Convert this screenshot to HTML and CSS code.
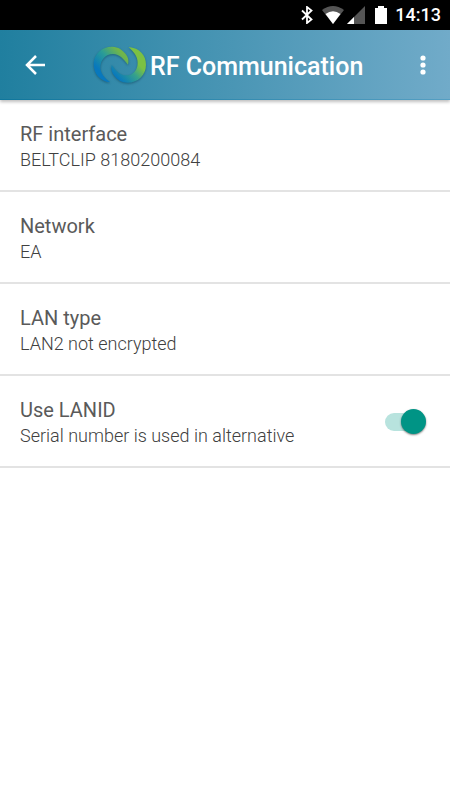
FILE: index.html
```html
<!DOCTYPE html>
<html lang="en">
<head>
<meta charset="utf-8">
<meta name="viewport" content="width=device-width, initial-scale=1">
<title>RF Communication</title>
<link rel="stylesheet" href="styles.css">
</head>
<body>
<div class="status-bar">
  <svg class="bluetooth" viewBox="0 0 12 18" aria-hidden="true"><path d="M1 4.500 10.500 13.500 6 17V1l4.500 3.500L1 13.500" fill="none" stroke="#fff" stroke-width="1.800"/></svg>
  <svg class="wifi" viewBox="0 0 22 18" aria-hidden="true"><path d="M0 4Q11-4 22 4L11 18Z" fill="#555"/><path d="M3.500 8Q11 2.500 18.500 8L11 18Z" fill="#fff"/></svg>
  <svg class="signal" viewBox="0 0 18 18" aria-hidden="true"><path d="M18 0V18H0Z" fill="#555"/><path d="M7 11V18H0Z" fill="#fff"/></svg>
  <svg class="battery" viewBox="0 0 12 18" aria-hidden="true"><path d="M3 0H9V2H12V18H0V2H3Z" fill="#fff"/></svg>
  <time>14:13</time>
</div>
<header class="app-bar">
  <button class="icon-button" type="button" aria-label="Back">
    <svg class="back-icon" viewBox="0 0 20 20" aria-hidden="true"><path d="M20 10H2M11 1 2 10l9 9" fill="none" stroke="#fff" stroke-width="2.500"/></svg>
  </button>
  <div class="brand">
    <svg class="logo" viewBox="0 0 162 114" aria-hidden="true">
      <defs>
        <linearGradient id="left" x1="0" y1="1" x2="1" y2="0"><stop offset="0.250" stop-color="#0878bd"/><stop offset="0.550" stop-color="#2b9c96"/><stop offset="0.800" stop-color="#70b54b"/></linearGradient>
        <linearGradient id="right" x1="0" y1="1" x2="1" y2="0"><stop offset="0.150" stop-color="#0878bd"/><stop offset="0.450" stop-color="#35a18c"/><stop offset="0.650" stop-color="#7bc143"/></linearGradient>
      </defs>
      <path d="M52 109C20 106 2 82 2 54C2 24 26 2 58 2C76 2 90 13 98 24C106 34 108 44 105 56C92 40 80 24 60 24C38 24 22 42 22 64C22 84 36 97 52 109Z" fill="url(#left)"/>
      <path d="M107 3C140 6 159 28 159 56C159 86 136 110 104 110C86 110 72 100 64 89C56 79 53 68 56 56C68 73 80 88 100 88C121 88 134 72 134 50C134 30 121 17 107 3Z" fill="url(#right)"/>
    </svg>
    <h1>RF Communication</h1>
  </div>
  <button class="icon-button" type="button" aria-label="More options">
    <svg class="more-icon" viewBox="0 0 6 20" aria-hidden="true"><g fill="#fff"><circle cx="3" cy="3" r="2.600"/><circle cx="3" cy="10" r="2.600"/><circle cx="3" cy="17" r="2.600"/></g></svg>
  </button>
</header>
<main class="settings">
  <button class="setting" type="button"><span class="label"><span class="title">RF interface</span><span class="summary">BELTCLIP 8180200084</span></span></button>
  <button class="setting" type="button"><span class="label"><span class="title">Network</span><span class="summary">EA</span></span></button>
  <button class="setting" type="button"><span class="label"><span class="title">LAN type</span><span class="summary">LAN2 not encrypted</span></span></button>
  <label class="setting" for="lanid"><span class="label"><span class="title">Use LANID</span><span class="summary">Serial number is used in alternative</span></span><input class="switch" id="lanid" type="checkbox" role="switch" checked></label>
</main>
</body>
</html>
```
FILE: styles.css
```css
* { box-sizing: border-box; }

body {
  margin: 0;
  background: #fff;
  color: #555;
  font-family: Roboto, sans-serif;
}

button {
  border: 0;
  background: none;
  color: inherit;
  font: inherit;
}

svg { display: block; }

.status-bar {
  display: flex;
  align-items: center;
  justify-content: flex-end;
  height: 30px;
  padding-right: 9px;
  background: #000;
  color: #fff;
  font-size: 18px;
  font-weight: 500;
  line-height: 32px;
}

.bluetooth { width: 12px; height: 18px; margin-right: 9px; }
.wifi { width: 22px; height: 18px; margin-right: 3px; }
.signal { width: 18px; height: 18px; margin-right: 10px; }
.battery { width: 12px; height: 18px; margin-right: 8px; }

.app-bar {
  display: flex;
  align-items: center;
  height: 70px;
  padding: 0 10px;
  background: linear-gradient(to right, #207f9f, #71abc9);
  border: solid;
  border-width: 0 0 1px;
  border-image: linear-gradient(to right, #0f769c, #559fc3) 1;
  box-shadow: 0 2px 3px rgba(0, 0, 0, 0.25);
  color: #fff;
}

.icon-button {
  display: grid;
  place-items: center;
  width: 50px;
  height: 50px;
  padding: 0;
}

.icon-button:last-child { width: 35px; margin-left: auto; }
.back-icon { width: 20px; height: 20px; }
.more-icon { width: 6px; height: 20px; }

.brand {
  display: flex;
  align-items: center;
  gap: 3px;
  margin-left: 33px;
}

.logo {
  width: 54px;
  height: 38px;
  filter: drop-shadow(0 1px 1px rgba(0, 40, 60, 0.4));
}

h1 {
  margin: 0;
  padding-top: 4px;
  font-size: 25px;
  font-weight: 500;
  line-height: 32px;
}

.setting {
  display: flex;
  align-items: center;
  justify-content: space-between;
  width: 100%;
  min-height: 92px;
  padding: 21px 20px 18px;
  border-bottom: 2px solid #e3e3e3;
  text-align: left;
}

.title, .summary { display: block; }
.title { color: #5a5a5a; font-size: 20px; line-height: 26px; }
.summary { color: #404040; font-size: 18px; font-weight: 300; line-height: 25px; }

.switch {
  appearance: none;
  position: relative;
  width: 36px;
  height: 18px;
  margin: 0 9px 2px 0;
  border-radius: 9px;
  background: #b8e3de;
}

.switch::after {
  content: "";
  position: absolute;
  top: -4px;
  right: -5px;
  width: 25px;
  height: 25px;
  border-radius: 50%;
  background: #009485;
  box-shadow: 0 1px 2px rgba(0, 0, 0, 0.5);
}
```
